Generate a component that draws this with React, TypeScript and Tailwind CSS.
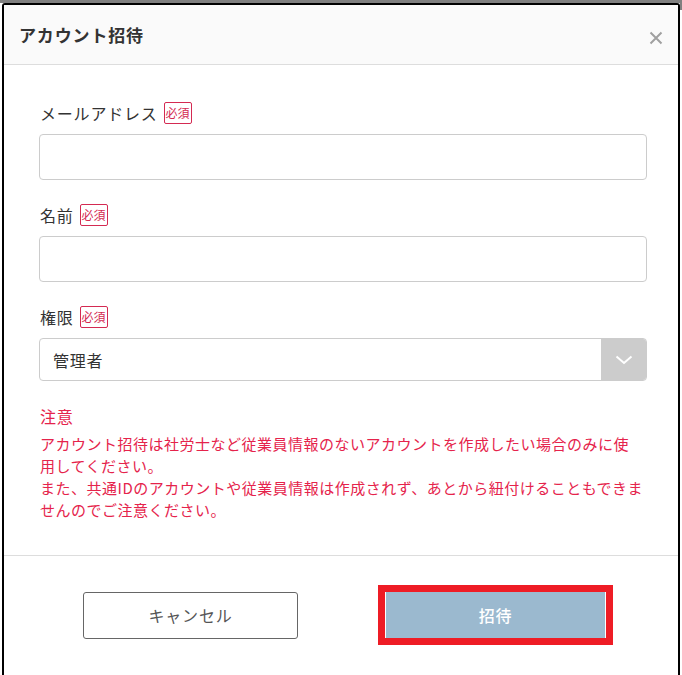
import React from "react";

function Badge() {
  return (
    <span className="ml-[6px] inline-flex h-[22px] items-center rounded-[2px] border border-[#d42a52] px-[1px] text-[12px] leading-none tracking-normal text-[#d42a52]">
      必須
    </span>
  );
}

function Label({ text }: { text: string }) {
  return (
    <div className="flex h-[24px] items-center pl-[1px] text-[16px] leading-[24px] tracking-[0.05em] text-[#333]">
      <span>{text}</span>
      <Badge />
    </div>
  );
}

export default function App() {
  return (
    <div
      className="relative h-[675px] w-[682px] overflow-hidden bg-white"
      style={{ fontFamily: '"Noto Sans CJK JP", "Noto Sans", sans-serif' }}
    >
      <div className="h-[3px] w-full bg-[#808080]" />
      <div className="absolute right-0 top-0 h-[10px] w-[2px] bg-[#808080]" />
      <div className="ml-[2px] h-[672px] w-[678px] rounded-t-[3px] border-2 border-b-0 border-black bg-white">
        <div className="flex h-[60px] items-center justify-between border-b border-[#dddddd] bg-[#fafafa] pl-[15px] pr-[15px]">
          <span className="text-[17px] font-bold tracking-[0.05em] text-[#333]">アカウント招待</span>
          <svg width="14" height="14" viewBox="0 0 14 14" className="mt-[6px]">
            <path d="M1.5 1.5 L12.5 12.5 M12.5 1.5 L1.5 12.5" stroke="#a0a0a0" strokeWidth="2" />
          </svg>
        </div>
        <div className="pl-[35px] pr-[31px] pt-[36px]">
          <Label text="メールアドレス" />
          <div className="mt-[9px] h-[46px] rounded-[4px] border border-[#cccccc]" />
          <div className="mt-[23px]">
            <Label text="名前" />
          </div>
          <div className="mt-[9px] h-[46px] rounded-[4px] border border-[#cccccc]" />
          <div className="mt-[23px]">
            <Label text="権限" />
          </div>
          <div className="mt-[9px] flex h-[43px] overflow-hidden rounded-[4px] border border-[#cccccc]">
            <div className="flex flex-1 items-center pl-[13px] text-[16px] tracking-[0.05em] text-[#333]">管理者</div>
            <div className="flex w-[45px] items-center justify-center bg-[#cccccc]">
              <svg width="18" height="10" viewBox="0 0 18 10">
                <path d="M1.5 1.5 L9 8 L16.5 1.5" fill="none" stroke="#ffffff" strokeWidth="2" />
              </svg>
            </div>
          </div>
          <div className="mt-[23px] pl-[1px] text-[16px] leading-[24px] tracking-[0.05em] text-[#e5234b]">注意</div>
          <div className="mt-[5px] whitespace-nowrap pl-[1px] text-[15px] leading-[22px] tracking-[0.5px] text-[#e5234b]">
            <p>
              アカウント招待は社労士など従業員情報のないアカウントを作成したい場合のみに使
              <br />
              用してください。
            </p>
            <p>
              また、共通IDのアカウントや従業員情報は作成されず、あとから紐付けることもできま
              <br />
              せんのでご注意ください。
            </p>
          </div>
        </div>
        <div className="mt-[34px] border-t border-[#dddddd]">
          <div className="flex items-center pl-[79px] pt-[29px]">
            <button className="h-[47px] w-[215px] rounded-[3px] border border-[#666] bg-white text-[16px] tracking-[0.05em] text-[#555]">
              キャンセル
            </button>
            <div className="ml-[80px] bg-[#ee1c25] px-[7px] py-[7px]">
              <button className="h-[46px] w-[221px] border-x border-white bg-[#9bb9cf] text-[16px] font-medium tracking-[0.05em] text-white">
                招待
              </button>
            </div>
          </div>
        </div>
      </div>
    </div>
  );
}
